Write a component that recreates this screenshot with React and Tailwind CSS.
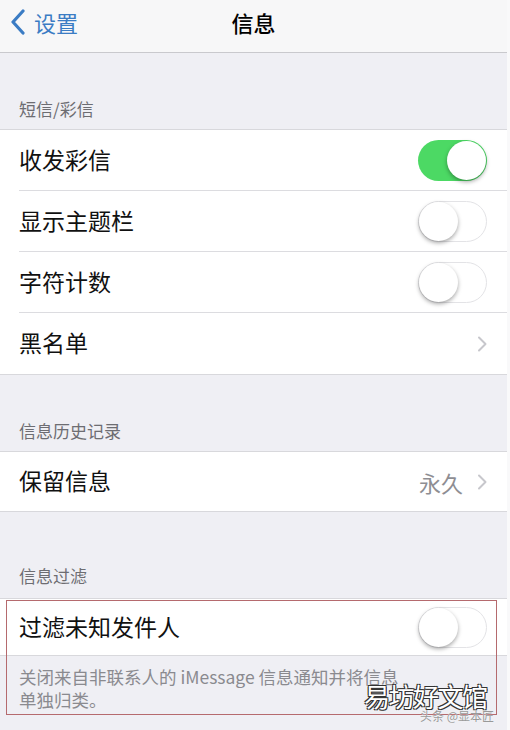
import React from 'react';

const font = { fontFamily: '"Noto Sans CJK SC", "Noto Sans", sans-serif' };

const Toggle = ({ on }) => (
    <div
        className={`relative w-[69px] h-[41px] rounded-full ${
            on ? 'bg-[#4cd964]' : 'bg-white border border-[#e3e3e6]'
        }`}
    >
        <div
            className={`absolute w-[39px] h-[39px] rounded-full bg-white shadow-[0_2px_4px_rgba(0,0,0,0.35)] ${
                on ? 'right-[1px] top-[1px]' : 'left-0 top-0'
            }`}
        />
    </div>
);

const Chevron = () => (
    <svg width="10" height="16" viewBox="0 0 10 16" className="shrink-0">
        <path d="M2 1.5 L8.5 8 L2 14.5" fill="none" stroke="#c7c7cc" strokeWidth="2" strokeLinecap="round" strokeLinejoin="round" />
    </svg>
);

const Row = ({ label, right, divider, h = 'h-[61px]' }) => (
    <div className={`relative flex items-center ${h} pl-[19px] pr-[20px]`}>
        <span className="flex-1 text-[23px] text-[#111] leading-none pb-[2px]">{label}</span>
        {right}
        {divider && <div className="absolute left-[19px] right-0 bottom-0 h-px bg-[#dcdce0]" />}
    </div>
);

const Header = ({ children, h, pb }) => (
    <div className={`flex items-end ${h} ${pb} pl-[19px] text-[17px] text-[#6d6d72] leading-6`}>
        {children}
    </div>
);

const Group = ({ children }) => (
    <div className="bg-white border-y border-[#d8d8dc]">{children}</div>
);

export default function App() {
    return (
        <div className="w-[510px] h-[730px] bg-[#f9f9fa] overflow-hidden" style={font}>
            <div className="relative w-[507px] h-[730px] bg-[#efeff4]">
                {/* Nav bar */}
                <div className="grid grid-cols-[1fr_auto_1fr] items-center h-[53px] pb-[9px] bg-[#f7f7f8] border-b border-[#c9c9cd]">
                    <div className="flex items-center pl-[10px] gap-[8px] text-[#3b7cc4]">
                        <svg width="16" height="26" viewBox="0 0 16 26">
                            <path d="M13 2 L3 13 L13 24" fill="none" stroke="#3b7cc4" strokeWidth="3.2" strokeLinecap="round" strokeLinejoin="round" />
                        </svg>
                        <span className="text-[22px] leading-none">设置</span>
                    </div>
                    <span className="text-[22px] font-medium text-black leading-none">信息</span>
                    <div />
                </div>

                <Header h="h-[76px]" pb="pb-[8px]">短信/彩信</Header>
                <Group>
                    <Row label="收发彩信" right={<Toggle on />} divider />
                    <Row label="显示主题栏" right={<Toggle />} divider />
                    <Row label="字符计数" right={<Toggle />} divider />
                    <Row label="黑名单" right={<Chevron />} />
                </Group>

                <Header h="h-[76px]" pb="pb-[8px]">信息历史记录</Header>
                <Group>
                    <Row
                        label="保留信息"
                        h="h-[59px]"
                        right={
                            <div className="flex items-center gap-[14px]">
                                <span className="text-[22px] text-[#8e8e93] leading-none">永久</span>
                                <Chevron />
                            </div>
                        }
                    />
                </Group>

                <Header h="h-[86px]" pb="pb-[10px]">信息过滤</Header>
                <Group>
                    <Row label="过滤未知发件人" h="h-[56px]" right={<Toggle />} />
                </Group>
                <div className="pl-[19px] pt-[9px] text-[17.5px] text-[#8a8a8f] leading-[23px]">
                    关闭来自非联系人的 iMessage 信息通知并将信息
                    <br />
                    单独归类。
                </div>

                {/* Highlight box */}
                <div className="absolute left-[6px] top-[600px] w-[491px] h-[115px] border border-[#b56a6e] pointer-events-none" />

                {/* Watermark */}
                <div className="absolute left-[364px] top-[683px] text-[26px] leading-none text-white tracking-[-1.5px] [text-shadow:_-1px_-1px_0_#333,_1px_-1px_0_#333,_-1px_1px_0_#333,_1px_1px_0_#333]">
                    易坊好文馆
                </div>
                <div className="absolute left-[420px] top-[710px] text-[12px] leading-none text-[#999] [text-shadow:_0_0_1px_#fff]">
                    头条 @显本匠
                </div>
            </div>
        </div>
    );
}
